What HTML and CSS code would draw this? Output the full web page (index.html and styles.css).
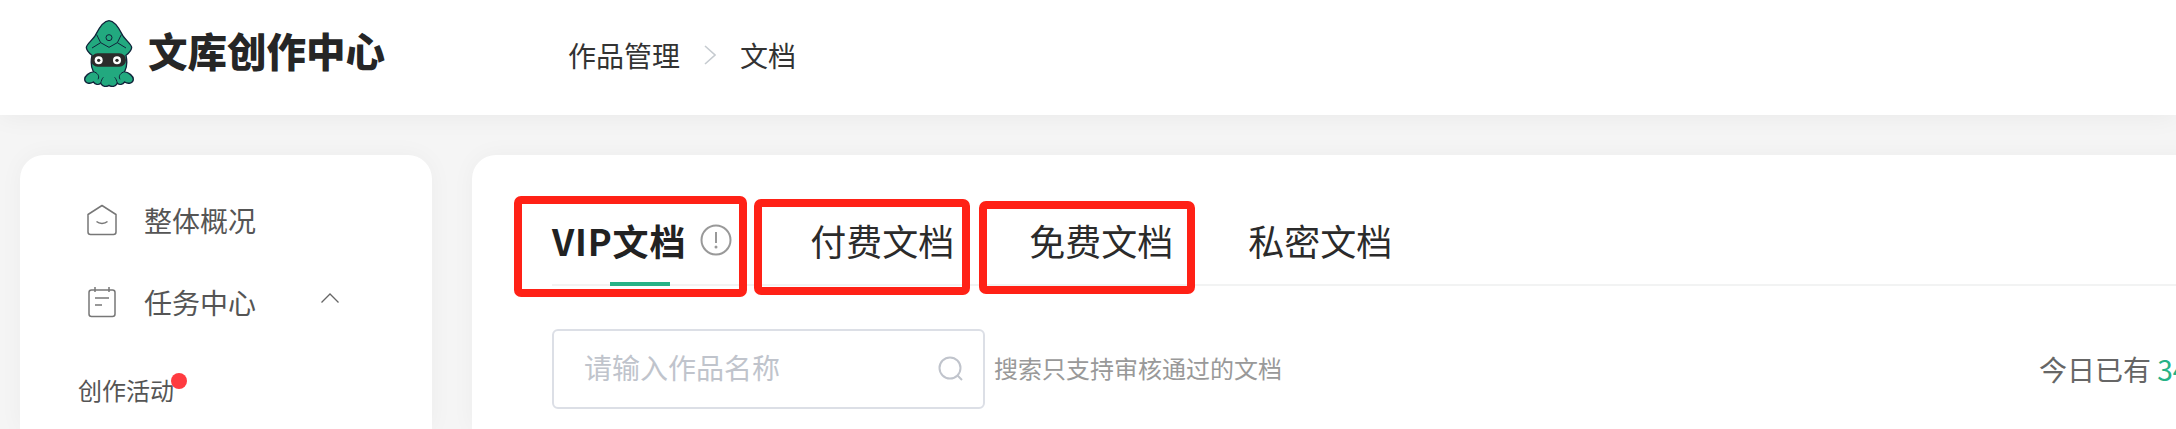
FILE: index.html
```html
<!DOCTYPE html>
<html lang="zh-CN">
<head>
    <meta charset="UTF-8">
    <title>文库创作中心</title>
    <link rel="stylesheet" href="styles.css">
</head>
<body>
    <header class="top">
        <div class="logo">
            <svg class="logo-pic" viewBox="0 0 150 201" width="50" height="67">
                <path d="M75 2C92 2 106 26 116 46C124 60 142 72 143 82C143 92 134 100 126 106C130 125 130 140 122 155C135 158 148 168 148 178C148 190 132 193 122 186C116 193 107 196 100 190C94 200 84 202 75 196C66 202 56 200 50 190C43 196 34 193 28 186C18 193 2 190 2 178C2 168 15 158 28 155C20 140 20 125 24 106C16 100 7 92 7 82C8 72 26 60 34 46C44 26 58 2 75 2Z" fill="#22a97f" stroke="#10233a" stroke-width="4"/>
                <path d="M24 84L50 68L75 82L100 68L126 84M50 68L38 44M100 68L112 44" fill="none" stroke="#10233a" stroke-width="3"/>
                <circle cx="75" cy="53" r="9" fill="none" stroke="#10233a" stroke-width="3"/>
                <rect x="21" y="100" width="105" height="40" rx="20" fill="#2b2b2b"/>
                <circle cx="44" cy="121" r="12" fill="#fff"/>
                <circle cx="44" cy="121" r="5" fill="#2b2b2b"/>
                <circle cx="99" cy="121" r="12" fill="#fff"/>
                <circle cx="99" cy="121" r="5" fill="#2b2b2b"/>
                <path d="M28 155C40 158 48 168 42 178M122 155C110 158 102 168 108 178M50 190C52 182 54 176 58 172M100 190C98 182 96 176 92 172" fill="none" stroke="#10233a" stroke-width="3"/>
            </svg>
            <span class="logo-name">文库创作中心</span>
        </div>
        <nav class="crumbs">
            <span>作品管理</span>
            <svg class="crumb-arrow" viewBox="0 0 12 20" width="12" height="20">
                <path d="M1 1L11 10L1 19" fill="none" stroke="#c6cbd0" stroke-width="1.6"/>
            </svg>
            <span>文档</span>
        </nav>
    </header>

    <div class="page">
        <aside class="side">
            <div class="side-item">
                <svg class="side-icon" viewBox="0 0 32 32" width="32" height="32">
                    <path d="M2 10.500L16 1.500L30 10.500V28a2.500 2.500 0 0 1-2.500 2.500h-23A2.500 2.500 0 0 1 2 28Z" fill="none" stroke="#777" stroke-width="1.500" stroke-linejoin="round"/>
                    <path d="M10.500 17.500c3 2.600 8 2.600 11 0" fill="none" stroke="#777" stroke-width="1.500"/>
                </svg>
                <span>整体概况</span>
            </div>
            <div class="side-item">
                <svg class="side-icon" viewBox="0 0 32 32" width="32" height="32">
                    <rect x="3" y="4" width="26" height="26.500" rx="2.500" fill="none" stroke="#777" stroke-width="1.500"/>
                    <path d="M9 1v5M23 1v5M9 12h14M9 19h7" fill="none" stroke="#777" stroke-width="1.500"/>
                </svg>
                <span>任务中心</span>
                <svg class="side-arrow" viewBox="0 0 18 10" width="18" height="10">
                    <path d="M.5 9.500L9 1l8.500 8.500" fill="none" stroke="#666" stroke-width="1.300"/>
                </svg>
            </div>
            <div class="side-sub">
                <span class="sub-name">创作活动<i class="dot"></i></span>
            </div>
        </aside>

        <main class="main">
            <div class="tabs">
                <div class="tab tab-on">VIP文档
                    <svg class="tab-tip" viewBox="0 0 32 32" width="32" height="32">
                        <circle cx="16" cy="16" r="14.500" fill="none" stroke="#999" stroke-width="2"/>
                        <path d="M16 8v11" stroke="#999" stroke-width="2"/>
                        <circle cx="16" cy="23" r="1.500" fill="#999"/>
                    </svg>
                    <i class="tab-line"></i>
                </div>
                <div class="tab tab-pay">付费文档</div>
                <div class="tab">免费文档</div>
                <div class="tab">私密文档</div>
            </div>
            <div class="tools">
                <label class="search">
                    <input type="text" placeholder="请输入作品名称">
                    <svg viewBox="0 0 26 26" width="26" height="26">
                        <circle cx="12" cy="12" r="10.500" fill="none" stroke="#c0c4cc" stroke-width="2"/>
                        <path d="M19.500 19.500L24 24" stroke="#c0c4cc" stroke-width="2"/>
                    </svg>
                </label>
                <span class="hint">搜索只支持审核通过的文档</span>
                <span class="today">今日已有 <b>34</b></span>
            </div>
        </main>
    </div>

    <i class="mark mark-a"></i>
    <i class="mark mark-b"></i>
    <i class="mark mark-c"></i>
</body>
</html>
```

FILE: styles.css
```css
html, body {
    height: 100%;
}
body {
    position: relative;
    margin: 0;
    overflow: hidden;
    background-color: #f5f5f5;
    font-family: "Noto Sans CJK SC", "Noto Sans", sans-serif;
    color: #333;
}
.top {
    position: relative;
    display: flex;
    align-items: center;
    height: 115px;
    padding-left: 84px;
    background-color: #fff;
    box-shadow: 0 2px 24px rgba(0, 0, 0, 0.05);
}
.logo {
    display: flex;
    align-items: center;
    gap: 14px;
    width: 484px;
    margin-bottom: 9px;
}
.logo-pic {
    flex: none;
}
.logo-name {
    margin-bottom: 6px;
    font-size: 39.500px;
    line-height: 50px;
    font-weight: 900;
    color: #262626;
}
.crumbs {
    display: flex;
    align-items: center;
    gap: 24px;
    margin-bottom: 5px;
    font-size: 28px;
}
.page {
    display: flex;
    gap: 40px;
    padding: 40px 0 0 20px;
}
.side {
    flex: none;
    width: 412px;
    height: 274px;
    padding-top: 24px;
    box-sizing: border-box;
    background-color: #fff;
    border-radius: 24px 24px 0 0;
    box-shadow: 0 0 24px rgba(0, 0, 0, 0.04);
}
.side-item {
    display: flex;
    align-items: center;
    height: 82px;
    padding-left: 66px;
    font-size: 28px;
    color: #555;
}
.side-icon {
    flex: none;
    margin-right: 26px;
}
.side-arrow {
    margin: -9px 0 0 65px;
}
.side-sub {
    padding: 29px 0 0 58px;
    font-size: 24px;
    line-height: 36px;
    color: #555;
}
.sub-name {
    position: relative;
    display: inline-block;
}
.dot {
    position: absolute;
    top: 1px;
    right: -13px;
    width: 16px;
    height: 16px;
    border-radius: 50%;
    background-color: #ff3b40;
}
.main {
    flex: none;
    width: 1720px;
    height: 274px;
    padding-left: 80px;
    box-sizing: border-box;
    background-color: #fff;
    border-radius: 24px 0 0 0;
    box-shadow: 0 0 24px rgba(0, 0, 0, 0.04);
}
.tabs {
    display: flex;
    gap: 75px;
    padding-top: 60px;
    border-bottom: 2px solid #f2f3f3;
}
.tab {
    position: relative;
    display: flex;
    align-items: center;
    height: 50px;
    padding-bottom: 19px;
    font-size: 36px;
    line-height: 50px;
    color: #2b2b2b;
}
.tab-on {
    font-weight: 700;
    letter-spacing: 0.8px;
    color: #222;
}
.tab-pay {
    margin-left: 3px;
}
.tab-tip {
    margin-left: 14px;
}
.tab-line {
    position: absolute;
    left: 58px;
    bottom: -2px;
    width: 60px;
    height: 4px;
    background-color: #27b286;
}
.tools {
    display: flex;
    align-items: center;
    margin-top: 43px;
}
.search {
    display: flex;
    align-items: center;
    width: 433px;
    height: 80px;
    padding: 0 19px 0 30px;
    box-sizing: border-box;
    border: 2px solid #dcdfe6;
    border-radius: 6px;
}
.search input {
    flex: 1;
    min-width: 0;
    padding: 0 0 4px;
    border: 0;
    outline: 0;
    font-family: inherit;
    font-size: 28px;
}
.search input::placeholder {
    color: #c0c4cc;
}
.hint {
    margin: 0 0 4px 9px;
    font-size: 24px;
    color: #999;
}
.today {
    margin: 0 0 1px 757px;
    font-size: 28px;
    white-space: nowrap;
    color: #666;
}
.today b {
    font-weight: 400;
    color: #27b286;
}
/* red marks drawn over the tabs */
.mark {
    position: absolute;
    box-sizing: border-box;
    border: 8px solid #ff2116;
    border-radius: 7px;
}
.mark-a {
    left: 514px;
    top: 196px;
    width: 233px;
    height: 101px;
}
.mark-b {
    left: 754px;
    top: 199px;
    width: 216px;
    height: 96px;
}
.mark-c {
    left: 979px;
    top: 201px;
    width: 216px;
    height: 93px;
}
```
